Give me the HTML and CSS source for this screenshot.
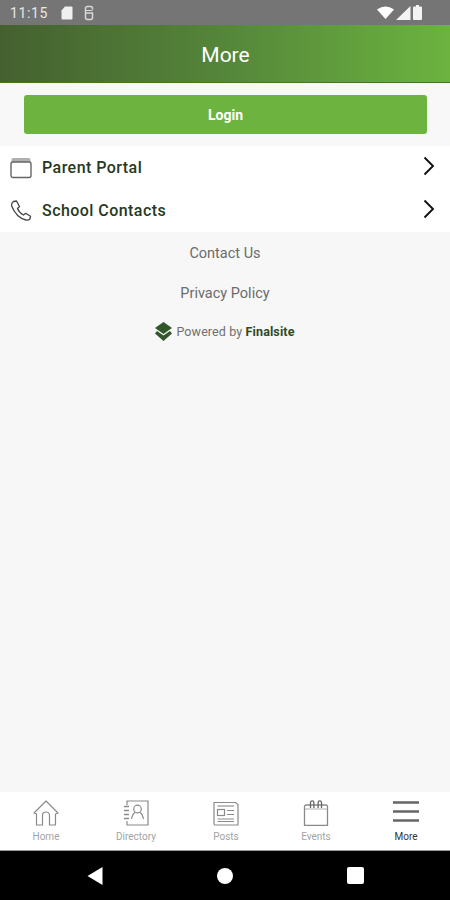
FILE: index.html
```html
<!DOCTYPE html>
<html lang="en">
<head>
    <meta charset="UTF-8">
    <meta name="viewport" content="width=device-width, initial-scale=1.0">
    <title>More</title>
    <link rel="stylesheet" href="styles.css">
</head>
<body>
    <div class="status-bar">
        <span class="status-time">11:15</span>
        <svg class="status-icon" width="14" height="16" viewBox="0 0 14 16"><path d="M5 1.500h6.500a1 1 0 0 1 1 1v11a1 1 0 0 1-1 1h-9a1 1 0 0 1-1-1V5.500z" fill="#f0f0f0"/></svg>
        <svg class="status-icon status-icon-g" width="12" height="16" viewBox="0 0 12 16"><path d="M9.500 4.500v-1a2 2 0 0 0-2-2h-3a2 2 0 0 0-2 2v9a2 2 0 0 0 2 2h3a2 2 0 0 0 2-2V8H2.500" fill="none" stroke="#d8d8d8" stroke-width="1.500"/><path d="M2.500 5.500h7" stroke="#d8d8d8" stroke-width="1"/></svg>
        <div class="status-right">
            <svg width="17" height="13" viewBox="0 0 17 13"><path d="M0 3.500Q8.500-2.500 17 3.500L8.500 13z" fill="#fff"/></svg>
            <svg width="15" height="14" viewBox="0 0 15 14"><path d="M14.500 0v14H0z" fill="#f4f4f4"/></svg>
            <svg width="9" height="15" viewBox="0 0 9 15"><path d="M3 0h3v1.500h2a1 1 0 0 1 1 1V14a1 1 0 0 1-1 1H1a1 1 0 0 1-1-1V2.500a1 1 0 0 1 1-1h2z" fill="#f4f4f4"/></svg>
        </div>
    </div>

    <header class="app-header">More</header>

    <div class="login-wrap">
        <button class="login-button">Login</button>
    </div>

    <div class="menu-list">
        <div class="menu-row">
            <svg class="menu-icon" width="24" height="22" viewBox="0 0 24 22" fill="none" stroke="#666">
                <path d="M3 1h16a1.500 1.500 0 0 1 1.500 1.500V5h-19V2.500A1.500 1.500 0 0 1 3 1z" fill="#b0b0b0" stroke="none"/>
                <rect x="1" y="5" width="20" height="15.500" rx="2" stroke-width="1.400"/>
            </svg>
            <span class="menu-label">Parent Portal</span>
            <svg class="menu-arrow" width="14" height="20" viewBox="0 0 14 20"><path d="M2.500 1.500L11 10l-8.500 8.500" fill="none" stroke="#111" stroke-width="1.900"/></svg>
        </div>
        <div class="menu-row">
            <svg class="menu-icon" width="24" height="22" viewBox="0 0 24 22"><path d="M3.500 1.500L6.500 1l3 5.500-2 2q1.500 4 6 6.500l2.200-1.700 4.800 3-.6 2.700q-1.500 1.500-3.900 1Q6 17.500 1.500 5.500q-.2-2.500 2-4z" fill="none" stroke="#444" stroke-width="1.300" stroke-linejoin="round"/></svg>
            <span class="menu-label">School Contacts</span>
            <svg class="menu-arrow" width="14" height="20" viewBox="0 0 14 20"><path d="M2.500 1.500L11 10l-8.500 8.500" fill="none" stroke="#111" stroke-width="1.900"/></svg>
        </div>
    </div>

    <main class="content">
        <a class="text-link">Contact Us</a>
        <a class="text-link">Privacy Policy</a>
        <div class="powered">
            <svg width="17" height="19" viewBox="0 0 17 19">
                <path d="M8.500 0L17 6 8.500 12 0 6z" fill="#33562a"/>
                <path d="M2 9l6.500 4.500L15 9l2 2.500L8.500 19 0 11.500z" fill="#33562a"/>
            </svg>
            <span>Powered by <b>Finalsite</b></span>
        </div>
    </main>

    <nav class="tab-bar">
        <div class="tab">
            <svg width="26" height="26" viewBox="0 0 26 26" fill="none" stroke="#8a8a8a" stroke-width="1.200" stroke-linejoin="round"><path d="M1 13L13 1l12 12-2.500 1v11h-6V15.500a3.500 3.500 0 0 0-7 0V25h-6V14z"/></svg>
            <span>Home</span>
        </div>
        <div class="tab">
            <svg width="26" height="26" viewBox="0 0 26 26" fill="none" stroke="#8a8a8a" stroke-width="1.200"><path d="M4 5V1h21v24H4v-4"/><path d="M1 6.500h5M1 10.500h5M1 14.500h5M1 18.500h5" stroke-width="1.300"/><circle cx="14.500" cy="9" r="3.800"/><path d="M8.500 19q1-5 3.500-6.500M20.500 19q-1-5-3.500-6.500"/></svg>
            <span>Directory</span>
        </div>
        <div class="tab">
            <svg width="26" height="26" viewBox="0 0 26 26" fill="none" stroke="#8a8a8a" stroke-width="1.200"><path d="M1 2.500h21.500l2.500 2V25H2.500A1.500 1.500 0 0 1 1 23.500z"/><path d="M4.500 6h16.500" stroke="#aaa" stroke-width="1.500"/><rect x="4.500" y="9.500" width="7" height="6"/><path d="M14 10.500h7M14 14.500h7M4.500 19h16.500M4.500 21.500h16.500"/></svg>
            <span>Posts</span>
        </div>
        <div class="tab">
            <svg width="26" height="26" viewBox="0 0 26 26" fill="none" stroke="#8a8a8a" stroke-width="1.300"><path d="M3 5h20a1.500 1.500 0 0 1 1.500 1.500v19h-23v-19A1.500 1.500 0 0 1 3 5z"/><path d="M2 9h22" stroke="#b0b0b0" stroke-width="1"/><path d="M7.500 8V2.500a1.700 1.700 0 0 1 3.400 0V8M15.100 8V2.500a1.700 1.700 0 0 1 3.400 0V8" stroke="#666"/></svg>
            <span>Events</span>
        </div>
        <div class="tab tab-active">
            <svg width="26" height="26" viewBox="0 0 26 26" fill="none" stroke="#666" stroke-width="2.500"><path d="M0 2.500h26M0 11.500h26M0 20.500h26"/></svg>
            <span>More</span>
        </div>
    </nav>

    <div class="system-nav">
        <svg width="16" height="18" viewBox="0 0 16 18"><path d="M15.500 0v18L.5 9z" fill="#fff"/></svg>
        <div class="nav-circle"></div>
        <div class="nav-square"></div>
    </div>
</body>
</html>
```

FILE: styles.css
```css
* {
    margin: 0;
    padding: 0;
    box-sizing: border-box;
    font-family: Roboto, "Liberation Sans", sans-serif;
}

body {
    width: 450px;
    height: 900px;
    display: flex;
    flex-direction: column;
    overflow: hidden;
    background-color: #f7f7f7;
}

.status-bar {
    height: 25px;
    background-color: #757575;
    display: flex;
    align-items: center;
    padding: 0 28px 0 10px;
    color: #e8e8e8;
}

.status-time {
    font-size: 14px;
    letter-spacing: 0.6px;
    margin-right: 12px;
}

.status-icon-g {
    margin-left: 9px;
}

.status-right {
    margin-left: auto;
    display: flex;
    align-items: center;
    gap: 2px;
}

.app-header {
    height: 58px;
    background: linear-gradient(90deg, #44602f 0%, #55863a 50%, #6cb33f 100%);
    border-bottom: 1px solid #3f7a1e;
    color: #fff;
    font-size: 21px;
    padding: 2px 0 0 1px;
    display: flex;
    align-items: center;
    justify-content: center;
}

.login-wrap {
    height: 63px;
    padding: 12px 23px 12px 24px;
    background-color: #f8f8f8;
}

.login-button {
    width: 100%;
    height: 39px;
    background-color: #6cb33f;
    border: none;
    border-radius: 3px;
    color: #fff;
    font-size: 14px;
    font-weight: 700;
}

.menu-list {
    background-color: #fff;
    height: 86px;
}

.menu-row {
    height: 43px;
    display: flex;
    align-items: center;
    padding: 0 14px 0 10px;
}

.menu-icon {
    margin-right: 8px;
}

.menu-label {
    font-size: 16px;
    font-weight: 500;
    letter-spacing: 0.45px;
    color: #26391d;
}

.menu-arrow {
    margin-left: auto;
    margin-bottom: 3px;
}

.content {
    flex: 1;
    display: flex;
    flex-direction: column;
    align-items: center;
    padding-top: 13px;
}

.text-link {
    font-size: 14.5px;
    line-height: 17px;
    height: 40px;
    color: #6b6b6b;
}

.powered {
    display: flex;
    align-items: center;
    gap: 4px;
    font-size: 12.5px;
    letter-spacing: 0.12px;
    color: #6f6f6f;
    margin-top: -3px;
}

.powered b {
    color: #2f4a26;
    font-weight: 700;
}

.tab-bar {
    width: 451px;
    height: 59px;
    padding-left: 1px;
    background-color: #fff;
    border-bottom: 1px solid #999;
    display: flex;
}

.tab {
    flex: 1;
    display: flex;
    flex-direction: column;
    align-items: center;
    padding-top: 8px;
    gap: 5px;
    font-size: 10px;
    color: #a3a3a3;
}

.tab svg {
    display: block;
}

.tab-active {
    color: #333;
}

.system-nav {
    height: 49px;
    background-color: #000;
    display: flex;
    align-items: center;
    padding: 0 86px 0 87px;
    justify-content: space-between;
}

.nav-circle {
    width: 16px;
    height: 16px;
    border-radius: 50%;
    background-color: #fff;
}

.nav-square {
    width: 17px;
    height: 17px;
    border-radius: 2px;
    background-color: #fff;
}
```
